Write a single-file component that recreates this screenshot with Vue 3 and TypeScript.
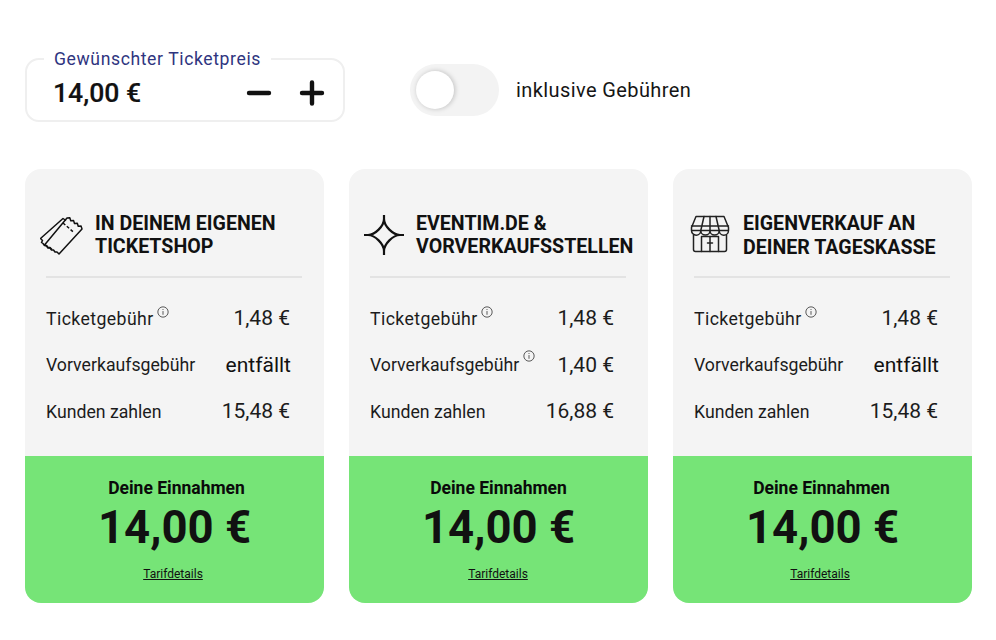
<script setup lang="ts">
interface Row { label: string; value: string; info?: boolean }
interface Card { id: string; title: string[]; rows: Row[] }

const cards: Card[] = [
  { id: 'ticket', title: ['IN DEINEM EIGENEN', 'TICKETSHOP'], rows: [
    { label: 'Ticketgebühr', value: '1,48 €', info: true },
    { label: 'Vorverkaufsgebühr', value: 'entfällt' },
    { label: 'Kunden zahlen', value: '15,48 €' },
  ] },
  { id: 'star', title: ['EVENTIM.DE &', 'VORVERKAUFSSTELLEN'], rows: [
    { label: 'Ticketgebühr', value: '1,48 €', info: true },
    { label: 'Vorverkaufsgebühr', value: '1,40 €', info: true },
    { label: 'Kunden zahlen', value: '16,88 €' },
  ] },
  { id: 'shop', title: ['EIGENVERKAUF AN', 'DEINER TAGESKASSE'], rows: [
    { label: 'Ticketgebühr', value: '1,48 €', info: true },
    { label: 'Vorverkaufsgebühr', value: 'entfällt' },
    { label: 'Kunden zahlen', value: '15,48 €' },
  ] },
]
</script>

<template>
  <main class="page">
    <section class="controls">
      <fieldset class="price">
        <legend>Gewünschter Ticketpreis</legend>
        <span class="price-value">14,00 €</span>
        <span class="steppers">
          <svg width="26" height="26" viewBox="0 0 26 26"><path d="M3 13h20" stroke="#111" stroke-width="4.400" stroke-linecap="round" /></svg>
          <svg width="26" height="26" viewBox="0 0 26 26"><path d="M3 13h20M13 2.500v21" stroke="#111" stroke-width="4.400" stroke-linecap="round" /></svg>
        </span>
      </fieldset>
      <div class="toggle"><span class="knob"></span></div>
      <span class="toggle-label">inklusive Gebühren</span>
    </section>

    <section class="cards">
      <article v-for="card in cards" :key="card.id" class="card" :class="card.id">
        <div class="body">
          <header class="head">
            <svg v-if="card.id === 'ticket'" class="icon" width="44" height="38" viewBox="0 0 44 38" fill="none" stroke="#111" stroke-width="1.500" stroke-linejoin="round">
              <path d="M12 32.500 10 30.500 8 30.500 6.500 28.500 4.500 28.500 3 26.500 1.500 25.500 2.500 23.500 0.500 21.500 23 1.500 26 3.500" />
              <path d="M27 1 29.800 0.800 30.750 3.750 33.600 3.600 34.500 6.500 37.300 6.300 38.250 9.250 41.100 9.100 42 12 19 37 17 35 15 35 13.500 33 11.500 33 10 31 8 31 6.500 29 4.500 28z" />
              <path d="m23 6 2.300 2m1.500 1.300 2.300 2m1.500 1.300 2.300 2" />
            </svg>
            <svg v-else-if="card.id === 'star'" class="icon" width="42" height="42" viewBox="0 0 42 42" fill="none" stroke="#111" stroke-width="2.200">
              <path d="M21 1v4c0 7-9 16-16 16H1h4c7 0 16 9 16 16v4-4c0-7 9-16 16-16h4-4c-7 0-16-9-16-16V1z" />
            </svg>
            <svg v-else class="icon" width="40" height="38" viewBox="0 0 40 38" fill="none" stroke="#222" stroke-width="1.500" stroke-linejoin="round" stroke-linecap="round">
              <path d="M6 1.500h28l4.500 11v3H1.500v-3zM1.500 15.500a4.600 4.600 0 0 0 9.300 0 4.600 4.600 0 0 0 9.200 0 4.600 4.600 0 0 0 9.200 0 4.600 4.600 0 0 0 9.300 0" />
              <path d="M14 1.500 10.800 15.500M20 1.500v14M26 1.500l3.200 14M1.500 11h37" />
              <path d="M3.500 20v14.500a2 2 0 0 0 2 2h29a2 2 0 0 0 2-2V20" />
              <path d="M11.500 36.500V21.500h17v15M20 21.500v15M17.500 28H22.500" />
            </svg>
            <h2>{{ card.title[0] }}<br />{{ card.title[1] }}</h2>
          </header>
          <div class="rule"></div>
          <dl class="rows">
            <div v-for="row in card.rows" :key="row.label" class="row">
              <dt :class="{ track: row.label === 'Ticketgebühr' }">{{ row.label }}<svg v-if="row.info" class="info" width="12" height="12" viewBox="0 0 13 13" fill="none" stroke="#222" stroke-width=".8"><circle cx="6.500" cy="6.500" r="5.600" /><path d="M6.500 5.500v4M6.500 3.300v1" /></svg></dt>
              <dd :class="{ wide: row.value === 'entfällt' }">{{ row.value }}</dd>
            </div>
          </dl>
        </div>
        <footer class="earn">
          <h3>Deine Einnahmen</h3>
          <div class="amount">14,00 €</div>
          <a class="details">Tarifdetails</a>
        </footer>
      </article>
    </section>
  </main>
</template>

<style scoped>
.page {
  width: 996px;
  height: 640px;
  box-sizing: border-box;
  padding: 49px 24px 0 25px;
  background: #fff;
  color: #111;
  font-family: Roboto, "Liberation Sans", sans-serif;
}
.controls {
  display: flex;
  align-items: flex-start;
  height: 120px;
}
.price {
  box-sizing: border-box;
  width: 320px;
  height: 73px;
  margin: 0 65px 0 0;
  padding: 0 18px 0 17px;
  border: 2px solid #efefef;
  border-radius: 14px;
  display: flex;
  align-items: center;
  justify-content: space-between;
}
.price legend {
  margin: 0;
  padding: 0 10px;
  color: #2f3580;
  font-size: 17.600px;
  line-height: 20px;
  letter-spacing: .6px;
  white-space: nowrap;
}
.price-value {
  margin-left: 9px;
  font-size: 26.600px;
  font-weight: 500;
  -webkit-text-stroke: .2px #111;
  position: relative;
  top: -2px;
}
.steppers {
  display: flex;
  gap: 27px;
  position: relative;
  top: -2px;
}
.toggle {
  width: 89px;
  height: 52px;
  margin-top: 15px;
  border-radius: 26px;
  background: #f3f3f3;
  display: flex;
  align-items: center;
  padding-left: 6px;
  box-sizing: border-box;
}
.knob {
  width: 38px;
  height: 38px;
  border-radius: 50%;
  background: #fff;
  box-shadow: 1px 0 5px rgba(0, 0, 0, .22);
}
.toggle-label {
  margin: 29px 0 0 17px;
  font-size: 20px;
  line-height: 24px;
  letter-spacing: .4px;
  color: #151515;
}
.cards {
  display: grid;
  grid-template-columns: repeat(3, 299px);
  column-gap: 25px;
}
.card {
  height: 434px;
  border-radius: 16px;
  overflow: hidden;
  display: flex;
  flex-direction: column;
  background: #f4f4f4;
}
.body {
  flex: 1;
  padding: 0 22px 0 21px;
}
.head {
  height: 107px;
  display: flex;
  align-items: center;
  padding-top: 24px;
  box-sizing: border-box;
}
.head h2 {
  margin: 0;
  font-size: 19.600px;
  line-height: 23px;
  font-weight: 700;
  color: #111;
  white-space: nowrap;
}
.shop h2 { line-height: 24px; padding-top: 2px; }
.icon { flex: none; }
.ticket .icon { margin: 2px 11px 0 -6px; }
.star .icon { margin: 1px 11px 0 -7px; }
.shop .icon { margin: -1px 13px 0 -4px; }
.rule {
  height: 2px;
  background: #e3e3e3;
}
.rows { margin: 0; padding: 17.500px 12px 0 0; }
.row {
  height: 46.500px;
  display: flex;
  align-items: center;
  justify-content: space-between;
}
dt {
  font-size: 17.700px;
  display: flex;
  color: #1c1c1c;
}
dt.track { letter-spacing: .4px; }
dd {
  margin: 0 0 1px;
  font-size: 21px;
  color: #1c1c1c;
}
dd.wide { color: #111; margin-right: -1px; }
.info {
  margin: 0 0 0 4px;
  position: relative;
  top: -5px;
}
dt.track .info {
  margin-left: 3px;
  top: -3px;
}
.earn {
  flex: none;
  height: 147px;
  background: #76e477;
  text-align: center;
  display: flex;
  flex-direction: column;
  align-items: center;
}
.earn h3 {
  margin: 21px 0 0;
  font-size: 17.500px;
  line-height: 22px;
  font-weight: 700;
  color: #0a0a0a;
}
.ticket h3 { margin-left: 4px; }
.shop h3 { margin-left: -2px; }
.amount {
  font-size: 45.500px;
  line-height: 58px;
  font-weight: 700;
  color: #111;
}
.details {
  margin-top: 9px;
  margin-left: -1px;
  font-size: 12px;
  line-height: 16px;
  color: #111;
  text-decoration: underline;
}
.ticket .details { margin-left: -3px; }
.shop .details { margin-left: -5px; }
</style>
